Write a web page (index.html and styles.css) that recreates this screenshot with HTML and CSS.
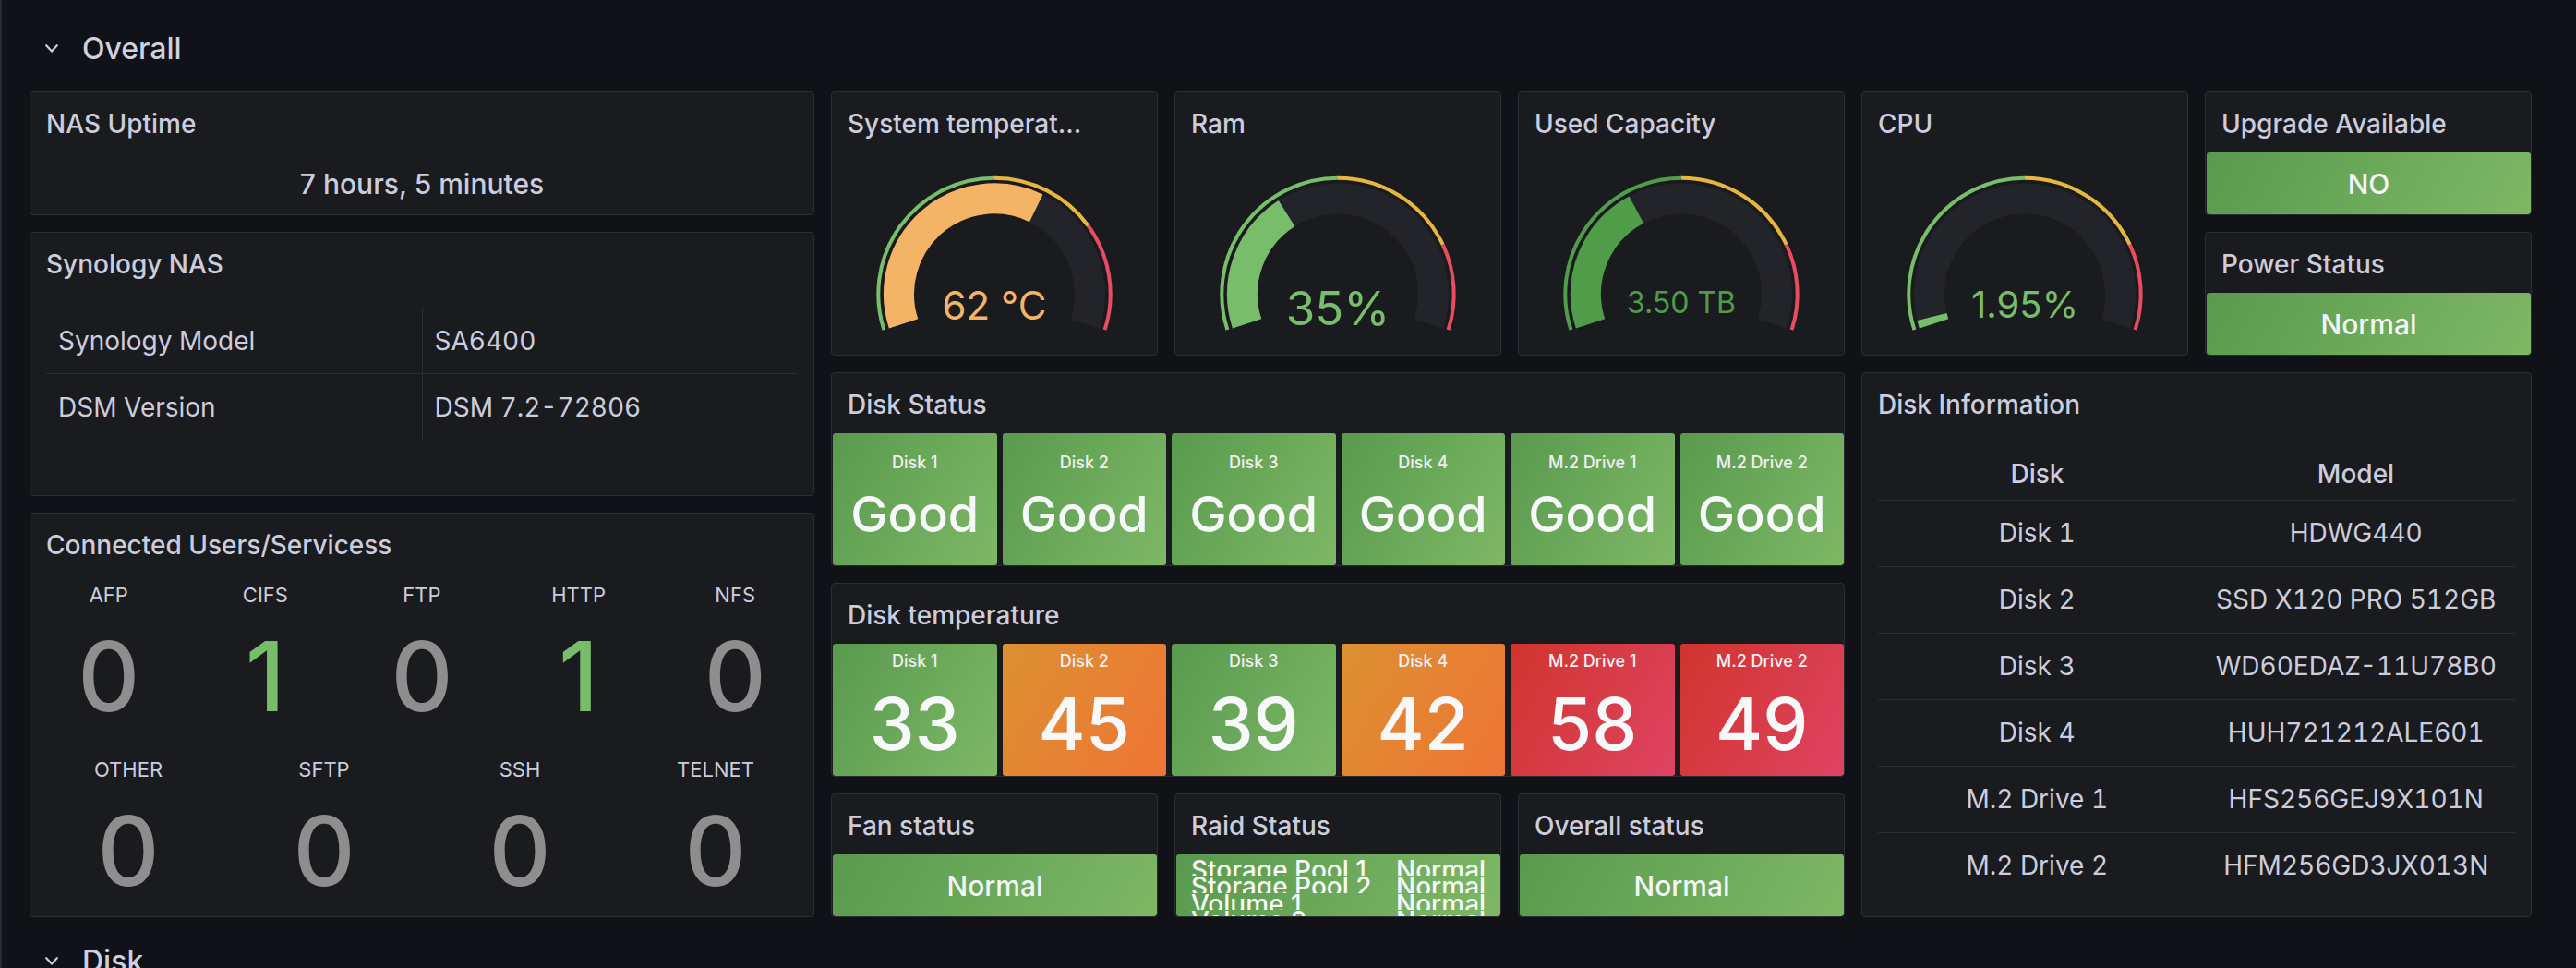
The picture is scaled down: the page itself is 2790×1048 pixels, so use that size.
FILE: index.html
```html
<!DOCTYPE html>
<html lang="en">
<head>
<meta charset="utf-8">
<title>Synology NAS</title>
<link rel="stylesheet" href="styles.css">
</head>
<body>
<div class="page">
  <div class="row-header">
    <svg class="chevron" viewBox="0 0 14 9" width="14" height="9"><polyline points="1.2,1.2 7,7.6 12.8,1.2"/></svg>
    <span>Overall</span>
  </div>

  <div class="grid">
    <div class="panel p-uptime">
      <div class="panel-title">NAS Uptime</div>
      <div class="panel-body center-value">7 hours, 5 minutes</div>
    </div>

    <div class="panel p-syno">
      <div class="panel-title">Synology NAS</div>
      <div class="panel-body table-wrap kv-wrap">
        <table class="kv">
          <tr><td>Synology Model</td><td>SA6400</td></tr>
          <tr><td>DSM Version</td><td>DSM 7.2-72806</td></tr>
        </table>
      </div>
    </div>

    <div class="panel p-conn">
      <div class="panel-title">Connected Users/Servicess</div>
      <div class="panel-body svc-body">
        <div class="svc-row svc-row-5">
          <div class="svc"><div class="svc-label">AFP</div><div class="svc-value">0</div></div>
          <div class="svc"><div class="svc-label">CIFS</div><div class="svc-value svc-on">1</div></div>
          <div class="svc"><div class="svc-label">FTP</div><div class="svc-value">0</div></div>
          <div class="svc"><div class="svc-label">HTTP</div><div class="svc-value svc-on">1</div></div>
          <div class="svc"><div class="svc-label">NFS</div><div class="svc-value">0</div></div>
        </div>
        <div class="svc-row svc-row-4">
          <div class="svc"><div class="svc-label">OTHER</div><div class="svc-value">0</div></div>
          <div class="svc"><div class="svc-label">SFTP</div><div class="svc-value">0</div></div>
          <div class="svc"><div class="svc-label">SSH</div><div class="svc-value">0</div></div>
          <div class="svc"><div class="svc-label">TELNET</div><div class="svc-value">0</div></div>
        </div>
      </div>
    </div>

    <div class="panel p-temp">
      <div class="panel-title">System temperat...</div>
      <div class="panel-body">
        <svg class="gauge" viewBox="0 0 352 219">
          <path class="g-track" d="M77.57 185.38 A103.5 103.5 0 1 1 274.43 185.38"/>
          <path class="g-fill c-orange" d="M77.57 185.38 A103.5 103.5 0 0 1 221.24 60.31"/>
          <path class="g-ring c-green" d="M56.45 192.24 A125.7 125.7 0 0 1 176 27.7"/>
          <path class="g-ring c-yellow" d="M176 27.7 A125.7 125.7 0 0 1 277.69 79.51"/>
          <path class="g-ring c-red" d="M277.69 79.51 A125.7 125.7 0 0 1 295.55 192.24"/>
          <text class="g-text t-orange" x="176" y="180.7" font-size="42">62 °C</text>
        </svg>
      </div>
    </div>

    <div class="panel p-ram">
      <div class="panel-title">Ram</div>
      <div class="panel-body">
        <svg class="gauge" viewBox="0 0 352 219">
          <path class="g-track" d="M77.57 185.38 A103.5 103.5 0 1 1 274.43 185.38"/>
          <path class="g-fill c-green" d="M77.57 185.38 A103.5 103.5 0 0 1 120.54 66.01"/>
          <path class="g-ring c-green" d="M56.45 192.24 A125.7 125.7 0 0 1 176 27.7"/>
          <path class="g-ring c-yellow" d="M176 27.7 A125.7 125.7 0 0 1 289.73 99.88"/>
          <path class="g-ring c-red" d="M289.73 99.88 A125.7 125.7 0 0 1 295.55 192.24"/>
          <text class="g-text t-green" x="176" y="186.7" font-size="51">35%</text>
        </svg>
      </div>
    </div>

    <div class="panel p-used">
      <div class="panel-title">Used Capacity</div>
      <div class="panel-body">
        <svg class="gauge" viewBox="0 0 352 219">
          <path class="g-track" d="M77.57 185.38 A103.5 103.5 0 1 1 274.43 185.38"/>
          <path class="g-fill c-dkgreen" d="M77.57 185.38 A103.5 103.5 0 0 1 127.28 62.08"/>
          <path class="g-ring c-dkgreen" d="M56.45 192.24 A125.7 125.7 0 0 1 176 27.7"/>
          <path class="g-ring c-yellow" d="M176 27.7 A125.7 125.7 0 0 1 289.73 99.88"/>
          <path class="g-ring c-red" d="M289.73 99.88 A125.7 125.7 0 0 1 295.55 192.24"/>
          <text class="g-text t-dkgreen" x="176" y="174" font-size="32">3.50 TB</text>
        </svg>
      </div>
    </div>

    <div class="panel p-cpu">
      <div class="panel-title">CPU</div>
      <div class="panel-body">
        <svg class="gauge" viewBox="0 0 352 219">
          <path class="g-track" d="M77.57 185.38 A103.5 103.5 0 1 1 274.43 185.38"/>
          <path class="g-fill c-green" d="M77.57 185.38 A103.5 103.5 0 0 1 75.48 178.07"/>
          <path class="g-ring c-green" d="M56.45 192.24 A125.7 125.7 0 0 1 176 27.7"/>
          <path class="g-ring c-yellow" d="M176 27.7 A125.7 125.7 0 0 1 289.73 99.88"/>
          <path class="g-ring c-red" d="M289.73 99.88 A125.7 125.7 0 0 1 295.55 192.24"/>
          <text class="g-text t-green" x="176" y="179.3" font-size="40">1.95%</text>
        </svg>
      </div>
    </div>

    <div class="panel p-upgrade">
      <div class="panel-title">Upgrade Available</div>
      <div class="panel-body"><div class="stat-box bg-green">NO</div></div>
    </div>

    <div class="panel p-power">
      <div class="panel-title">Power Status</div>
      <div class="panel-body"><div class="stat-box bg-green">Normal</div></div>
    </div>

    <div class="panel p-dstatus">
      <div class="panel-title">Disk Status</div>
      <div class="panel-body tiles tiles-status">
        <div class="tile bg-green"><div class="tile-label">Disk 1</div><div class="tile-value">Good</div></div>
        <div class="tile bg-green"><div class="tile-label">Disk 2</div><div class="tile-value">Good</div></div>
        <div class="tile bg-green"><div class="tile-label">Disk 3</div><div class="tile-value">Good</div></div>
        <div class="tile bg-green"><div class="tile-label">Disk 4</div><div class="tile-value">Good</div></div>
        <div class="tile bg-green"><div class="tile-label">M.2 Drive 1</div><div class="tile-value">Good</div></div>
        <div class="tile bg-green"><div class="tile-label">M.2 Drive 2</div><div class="tile-value">Good</div></div>
      </div>
    </div>

    <div class="panel p-dtemp">
      <div class="panel-title">Disk temperature</div>
      <div class="panel-body tiles tiles-temp">
        <div class="tile bg-green"><div class="tile-label">Disk 1</div><div class="tile-value">33</div></div>
        <div class="tile bg-orange"><div class="tile-label">Disk 2</div><div class="tile-value">45</div></div>
        <div class="tile bg-green"><div class="tile-label">Disk 3</div><div class="tile-value">39</div></div>
        <div class="tile bg-orange"><div class="tile-label">Disk 4</div><div class="tile-value">42</div></div>
        <div class="tile bg-red"><div class="tile-label">M.2 Drive 1</div><div class="tile-value">58</div></div>
        <div class="tile bg-red"><div class="tile-label">M.2 Drive 2</div><div class="tile-value">49</div></div>
      </div>
    </div>

    <div class="panel p-fan">
      <div class="panel-title">Fan status</div>
      <div class="panel-body"><div class="stat-box bg-green">Normal</div></div>
    </div>

    <div class="panel p-raid">
      <div class="panel-title">Raid Status</div>
      <div class="panel-body">
        <div class="raid-box bg-green">
          <div class="raid-row"><span class="raid-name">Storage Pool 1</span><span>Normal</span></div>
          <div class="raid-row"><span class="raid-name">Storage Pool 2</span><span>Normal</span></div>
          <div class="raid-row"><span class="raid-name">Volume 1</span><span>Normal</span></div>
          <div class="raid-row"><span class="raid-name">Volume 2</span><span>Normal</span></div>
        </div>
      </div>
    </div>

    <div class="panel p-overall">
      <div class="panel-title">Overall status</div>
      <div class="panel-body"><div class="stat-box bg-green">Normal</div></div>
    </div>

    <div class="panel p-dinfo">
      <div class="panel-title">Disk Information</div>
      <div class="panel-body table-wrap info-wrap">
        <table class="info">
          <thead><tr><th>Disk</th><th>Model</th></tr></thead>
          <tbody>
            <tr><td>Disk 1</td><td>HDWG440</td></tr>
            <tr><td>Disk 2</td><td>SSD X120 PRO 512GB</td></tr>
            <tr><td>Disk 3</td><td>WD60EDAZ-11U78B0</td></tr>
            <tr><td>Disk 4</td><td>HUH721212ALE601</td></tr>
            <tr><td>M.2 Drive 1</td><td>HFS256GEJ9X101N</td></tr>
            <tr><td>M.2 Drive 2</td><td>HFM256GD3JX013N</td></tr>
          </tbody>
        </table>
      </div>
    </div>
  </div>

  <div class="row-header row-next">
    <svg class="chevron" viewBox="0 0 14 9" width="14" height="9"><polyline points="1.2,1.2 7,7.6 12.8,1.2"/></svg>
    <span>Disk</span>
  </div>
</div>
</body>
</html>
```

FILE: styles.css
```css
html, body {
  margin: 0;
  padding: 0;
  height: 100%;
  overflow: hidden;
  background: #111217;
}

body {
  font-family: Inter, "Noto Sans", "Liberation Sans", sans-serif;
  color: #ccccdc;
}

.page {
  box-sizing: border-box;
  min-height: 100%;
  border-left: 2px solid #2a2b30;
  padding: 23px 0 0 30px;
}

.row-header {
  height: 58px;
  display: flex;
  align-items: center;
  padding-left: 17px;
  font-size: 32px;
  font-weight: 500;
  color: #d0d0de;
}

.row-header span {
  margin-left: 26px;
}

.row-next {
  margin-top: 18px;
}

.chevron {
  flex: none;
  fill: none;
  stroke: #ccccdc;
  stroke-width: 2.2;
  stroke-linecap: round;
  stroke-linejoin: round;
}

.grid {
  margin-top: 18px;
  display: grid;
  grid-template-columns: 850px repeat(5, 354px);
  grid-template-rows: repeat(12, 58px);
  gap: 18px;
}

.panel {
  background: #1a1b1f;
  border: 1px solid #2c2d32;
  border-radius: 4px;
  display: flex;
  flex-direction: column;
  overflow: hidden;
  min-height: 0;
}

.panel-title {
  flex: none;
  height: 63px;
  padding: 2px 17px 0;
  display: flex;
  align-items: center;
  font-size: 28px;
  font-weight: 500;
  color: #ccccdc;
  white-space: nowrap;
  overflow: hidden;
}

.panel-body {
  flex: 1;
  min-height: 0;
  position: relative;
}

/* grid placement */
.p-uptime { grid-column: 1; grid-row: 1 / span 2; }
.p-syno { grid-column: 1; grid-row: 3 / span 4; }
.p-conn { grid-column: 1; grid-row: 7 / span 6; }
.p-temp { grid-column: 2; grid-row: 1 / span 4; }
.p-ram { grid-column: 3; grid-row: 1 / span 4; }
.p-used { grid-column: 4; grid-row: 1 / span 4; }
.p-cpu { grid-column: 5; grid-row: 1 / span 4; }
.p-upgrade { grid-column: 6; grid-row: 1 / span 2; }
.p-power { grid-column: 6; grid-row: 3 / span 2; }
.p-dstatus { grid-column: 2 / span 3; grid-row: 5 / span 3; }
.p-dtemp { grid-column: 2 / span 3; grid-row: 8 / span 3; }
.p-fan { grid-column: 2; grid-row: 11 / span 2; }
.p-raid { grid-column: 3; grid-row: 11 / span 2; }
.p-overall { grid-column: 4; grid-row: 11 / span 2; }
.p-dinfo { grid-column: 5 / span 2; grid-row: 5 / span 8; }

/* uptime */
.center-value {
  display: flex;
  align-items: center;
  justify-content: center;
  font-size: 30px;
  font-weight: 500;
  color: #ccccdc;
}

/* tables */
.table-wrap {
  padding: 0 17px;
  overflow: hidden;
}

.kv-wrap {
  padding-top: 16px;
}

table {
  width: 100%;
  border-collapse: collapse;
  table-layout: fixed;
  font-size: 28px;
  color: #ccccdc;
  font-variant-numeric: tabular-nums;
}

.kv td {
  height: 71px;
  padding: 0 13px;
  text-align: left;
  white-space: nowrap;
}

.kv td:first-child {
  border-right: 1px solid #2c2d32;
}

.kv tr:first-child td {
  border-bottom: 1px solid #2c2d32;
}

.info-wrap {
  height: 493px;
  flex: none;
}

.info th {
  height: 72px;
  box-sizing: border-box;
  padding: 16px 0 0;
  font-weight: 500;
  text-align: center;
  border-bottom: 1px solid #2c2d32;
}

.info td {
  height: 71px;
  padding: 0;
  text-align: center;
  white-space: nowrap;
  border-bottom: 1px solid #2c2d32;
}

.info td:first-child {
  border-right: 1px solid #2c2d32;
}

/* connected services */
.svc-body {
  display: flex;
  flex-direction: column;
}

.svc-row {
  display: grid;
  height: 185px;
}

.svc-row-5 {
  grid-template-columns: repeat(5, 1fr);
  padding-top: 10px;
  box-sizing: border-box;
}

.svc-row-4 {
  grid-template-columns: repeat(4, 1fr);
  padding-top: 14px;
  box-sizing: border-box;
}

.svc {
  display: flex;
  flex-direction: column;
  align-items: center;
}

.svc-label {
  font-size: 22px;
  line-height: 26px;
  color: #ccccdc;
}

.svc-value {
  margin-top: 23px;
  font-size: 104px;
  line-height: 104px;
  font-weight: 500;
  color: #8e8e8e;
}

.svc-on {
  color: #77bd6a;
}

/* gauges */
.gauge {
  display: block;
  width: 352px;
  height: 219px;
}

.g-track {
  fill: none;
  stroke: #232429;
  stroke-width: 33;
}

.g-fill {
  fill: none;
  stroke-width: 33;
}

.g-ring {
  fill: none;
  stroke-width: 4;
}

.c-green { stroke: #77bd6a; }
.c-dkgreen { stroke: #4f9c49; }
.c-yellow { stroke: #e8b63f; }
.c-red { stroke: #e84c5e; }
.c-orange { stroke: #f4b465; }

.g-text {
  font-family: Inter, "Noto Sans", sans-serif;
  font-weight: 400;
  text-anchor: middle;
}

.t-green { fill: #77bd6a; }
.t-dkgreen { fill: #4f9c49; }
.t-orange { fill: #f4b465; }

/* stat boxes */
.bg-green { background: linear-gradient(120deg, #599a4e, #7eb866); }
.bg-orange { background: linear-gradient(120deg, #dc9131, #ef7435); }
.bg-red { background: linear-gradient(120deg, #d1342d, #de4462); }

.stat-box {
  height: 100%;
  margin: 0 0 0 1px;
  border-radius: 3px;
  display: flex;
  align-items: center;
  justify-content: center;
  font-size: 30px;
  font-weight: 500;
  color: #f4f5f8;
}

.tiles {
  display: grid;
  grid-template-columns: repeat(6, 1fr);
  gap: 6px;
  padding-left: 1px;
}

.tile {
  border-radius: 3px;
  display: flex;
  flex-direction: column;
  align-items: center;
  color: #f7f8fa;
  font-weight: 500;
  overflow: hidden;
}

.tile-label {
  font-size: 18px;
  line-height: 22px;
  color: #eef0f2;
}

.tiles-status .tile { padding-top: 21px; }
.tiles-status .tile-value {
  margin-top: 15px;
  font-size: 54px;
  line-height: 60px;
}

.tiles-temp .tile { padding-top: 8px; }
.tiles-temp .tile-value {
  margin-top: 17px;
  font-size: 78px;
  line-height: 80px;
}

/* raid */
.raid-box {
  height: 100%;
  margin-left: 1px;
  border-radius: 3px;
  box-sizing: border-box;
  padding: 5px 0 0 16px;
  overflow: hidden;
  color: #f7f8fa;
  font-size: 28px;
  font-weight: 500;
}

.raid-row {
  height: 18.33px;
  line-height: 24px;
  overflow: hidden;
  display: flex;
  white-space: nowrap;
}

.raid-name {
  width: 222px;
  flex: none;
}
```
